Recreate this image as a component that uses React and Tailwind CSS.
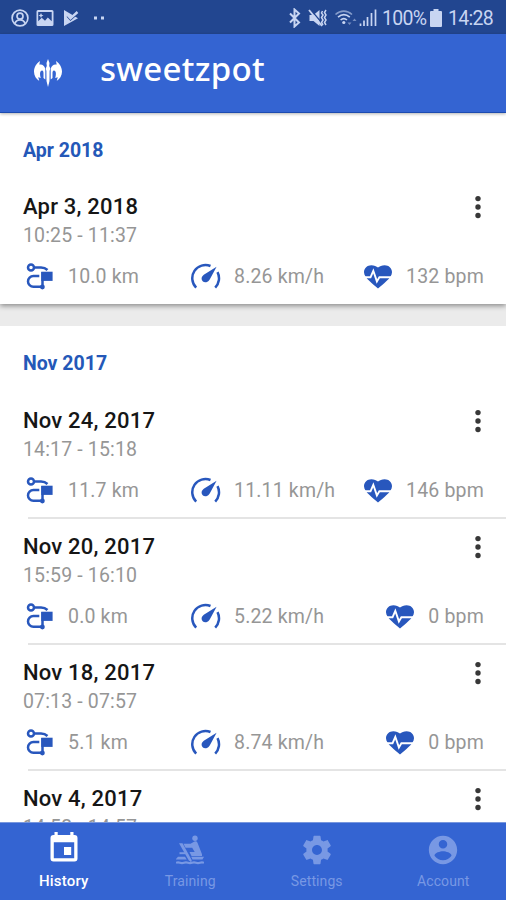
import React from "react";

function RouteIcon() {
  return (
    <svg className="h-7 w-7 shrink-0" viewBox="0 0 28 28" fill="none" stroke="#2857bd" strokeWidth="2.5">
      <circle cx="5" cy="4.500" r="3" />
      <path d="M8.400 4.500H15c3 0 4.600.7 6.500 2.500" />
      <path d="M13.300 13H7.400a5.400 5.400 0 0 0 0 10.800H16" strokeWidth="2.500" />
      <path d="M16.500 9V24" strokeWidth="2.500" />
      <path d="M15.300 8.700H26.600V17.900H15.300z" fill="#2857bd" stroke="none" />
      <circle cx="16.400" cy="24" r="2.400" fill="#2857bd" stroke="none" />
    </svg>
  );
}

function SpeedIcon() {
  return (
    <svg className="h-7 w-[30px] shrink-0" viewBox="0 0 30 28">
      <path d="M5.200 24.600A13.200 13.200 0 0 1 19.500 3M26.500 9.200A13.200 13.200 0 0 1 24.200 24.600" fill="none" stroke="#2857bd" strokeWidth="2.500" />
      <path d="M25.600 3.800 12.800 11.800c-4.600 3.400-1.200 9.200 3.600 6.900 1.300-.6 2-1.600 2.600-2.800z" fill="#2857bd" />
    </svg>
  );
}

function HeartIcon() {
  return (
    <svg className="h-6 w-7 shrink-0" viewBox="0 0 28 24">
      <path d="M14 23.600C10 19.600 0 13.200 0 7.300 0 3 3.400.2 7.300.2c2.800 0 5.200 1 6.700 2.300C15.500 1.200 17.900.2 20.700.2 24.600.2 28 3 28 7.300 28 13.200 18 19.600 14 23.600z" fill="#2857bd" />
      <path d="M0 12.300H6.500L9.300 5.800l3.600 10.600 2.500-4.100H28" fill="none" stroke="#fff" strokeWidth="1.900" />
    </svg>
  );
}

function MoreIcon() {
  return (
    <svg className="h-6 w-2 shrink-0" viewBox="0 0 8 24" fill="#383838">
      <circle cx="4" cy="3.600" r="2.700" />
      <circle cx="4" cy="12" r="2.700" />
      <circle cx="4" cy="20.500" r="2.700" />
    </svg>
  );
}

function Entry({ date, time, km, speed, bpm, last }) {
  return (
    <article className={km ? "h-[126px] shrink-0" : "h-[72px] shrink-0"}>
      <div className="flex h-[42px] items-end justify-between pr-6 pl-[23px]">
        <h3 className="text-[22px] leading-7 font-medium tracking-[0.200px] text-[#161616]">{date}</h3>
        <div className="mb-0.5 flex"><MoreIcon /></div>
      </div>
      <p className="h-[30px] pl-[23px] text-[19.500px] leading-[30px] tracking-[0.150px] text-[#969696]">{time}</p>
      {km && (
        <div className="mt-3 flex h-7 items-center pr-[22px] pl-[26px] text-[19.500px] tracking-[0.170px] text-[#969696]">
          <div className="flex w-[165px] items-center">
            <RouteIcon />
            <span className="ml-3.5">{km}</span>
          </div>
          <div className="flex items-center">
            <SpeedIcon />
            <span className="ml-[13px]">{speed}</span>
          </div>
          <div className="ml-auto flex items-center">
            <HeartIcon />
            <span className="ml-[14px]">{bpm}</span>
          </div>
        </div>
      )}
      {!last && <div className="mt-[12px] ml-7 h-[2px] bg-[#e4e4e4]" />}
    </article>
  );
}

function MonthTitle({ children, compact }) {
  return (
    <h2 className={`flex shrink-0 items-center pl-[23px] text-[19.500px] font-bold text-[#2458b8] ${compact ? "h-[66px] pt-[9px]" : "h-[67px] pt-2"}`}>
      {children}
    </h2>
  );
}

function StatusBar() {
  return (
    <header className="flex h-[34px] shrink-0 items-center bg-[#224690] pt-0.5 pr-[11px] pl-[11px] text-[#c8d5f2]">
      <svg className="h-[18px] w-[96px]" viewBox="0 0 96 18">
        <g fill="none" stroke="currentColor" strokeWidth="1.700">
          <circle cx="9" cy="9" r="7.900" />
          <circle cx="9" cy="7.200" r="3" />
          <path d="M3.700 14.800c1-3 3-4 5.300-4s4.300 1 5.300 4" />
        </g>
        <path fillRule="evenodd" fill="currentColor" d="M27 1h14q1.500 0 1.500 1.500v13Q42.500 17 41 17H27q-1.500 0-1.500-1.500v-13Q25.500 1 27 1zm.2 2v9.300l3.500-3.600 3.300 3 2.800-3.300 3.900 3.800V3zM30 4l.8 1.800 1.700.7-1.700.7L30 9l-.8-1.800-1.700-.7 1.700-.7z" />
        <path fill="currentColor" d="m53 1 14 8.200L53 17z" />
        <path d="m56.500 7 3 3.200L67.500 3" fill="none" stroke="#224690" strokeWidth="2.500" />
        <path d="m56 5.500 3.500 3.800L66.500 3" fill="none" stroke="currentColor" strokeWidth="2.400" />
        <path fill="currentColor" d="M83 7.500h3v3h-3zM90 7.500h3v3h-3z" />
      </svg>
      <svg className="ml-auto h-5 w-[90px]" viewBox="0 0 90 20" fill="none" stroke="currentColor">
        <path d="m1 5.500 9 9-4.500 4V1.500L10 5.500l-9 9" strokeWidth="2" />
        <path d="M20.500 7h4l6-5v16l-6-5h-4z" fill="currentColor" stroke="none" />
        <path d="m21 1 12 14" stroke="#224690" strokeWidth="1.300" />
        <path d="m20 2 13 16" strokeWidth="1.800" />
        <path d="m33.500 3-1 2 1.500 2-1.500 2.500L34 12l-1.500 2.500L34 17M37 2l-1.500 2.500L37 7l-1.500 2.500L37 12l-1.500 2.500L37 17" strokeWidth="1.500" />
        <g strokeWidth="1.600">
          <path d="M46.500 6.500c5-4.500 11.500-4.500 16.500 0" opacity=".6" />
          <path d="M49 9.200c3.700-3.200 8.100-3.200 11.800 0M51.600 12c2-1.800 4.400-1.800 6.400 0" />
        </g>
        <circle cx="54.800" cy="14.500" r="1.600" fill="currentColor" stroke="none" />
        <path d="m58.500 14.500 2 2.500 2-2.500zM63.500 13l2-2.500 2 2.500z" fill="currentColor" stroke="none" opacity=".5" />
        <path d="M71.500 15.500V18M75 12.500V18M78.500 9V18M82.500 5V18M86.500 1.500V18" strokeWidth="1.700" />
      </svg>
      <span className="mt-0.5 ml-[3px] w-[45px] text-[19.500px] leading-6 tracking-[-0.750px] whitespace-nowrap">100%</span>
      <svg className="ml-[3px] h-[18px] w-3" viewBox="0 0 12 18" fill="currentColor">
        <path d="M3.500 0h5v2H11q1 0 1 1v14q0 1-1 1H1q-1 0-1-1V3q0-1 1-1h2.500z" />
      </svg>
      <span className="mt-0.5 ml-[6px] w-[47px] text-[19.500px] leading-6 tracking-[-0.700px] whitespace-nowrap">14:28</span>
    </header>
  );
}

function CalendarIcon() {
  return (
    <svg className="h-[30px] w-7" viewBox="0 0 28 30" fill="currentColor">
      <path fillRule="evenodd" d="M4.500 0h3.200v3h12.600V0h3.200v3h1Q27.500 3 27.500 6v20.500q0 3-3 3h-21q-3 0-3-3V6q0-3 3-3h1zM3.800 10.300v15.900h20.400V10.300zM14 15h7.200v8H14z" />
    </svg>
  );
}

function RowingIcon() {
  return (
    <svg className="h-[30px] w-7" viewBox="0 0 28 30" fill="none" stroke="currentColor">
      <circle cx="19" cy="3.200" r="2.700" fill="currentColor" stroke="none" />
      <path d="M3 8.300h3.500l9 16.500q1 2-.8 2.200l-2-1.800z" fill="currentColor" stroke="none" />
      <path d="M7.500 8.700h7l4-2.200q2-.8 3 1.200L26 19.200V21H15.500l-2-4h5.200l-2.500-4.200H9.500z" fill="currentColor" stroke="none" />
      <path d="M3.500 18.200h6" strokeWidth="2" />
      <path d="M0 24 2 21.800h7l1.700 2.800H0zM16.500 24.600l-1.300-2.800H28l-1.500 2.800z" fill="currentColor" stroke="none" />
      <path d="M0 27.800q2-.8 4 0t4 0 4 0 4 0 4 0 4 0 4 0" strokeWidth="2.200" />
    </svg>
  );
}

function SettingsIcon() {
  return (
    <svg className="h-[34px] w-[34px]" viewBox="0 0 24 24" fill="currentColor">
      <path d="M19.430 12.980c.04-.32.07-.64.07-.98s-.03-.66-.07-.98l2.110-1.650c.19-.15.24-.42.12-.64l-2-3.460c-.12-.22-.39-.3-.61-.22l-2.490 1c-.52-.4-1.080-.73-1.690-.98l-.38-2.650C14.460 2.180 14.250 2 14 2h-4c-.25 0-.46.18-.49.42l-.38 2.650c-.61.25-1.170.59-1.690.98l-2.490-1c-.23-.09-.49 0-.61.22l-2 3.460c-.13.22-.07.49.12.64l2.110 1.650c-.04.32-.07.65-.07.98s.03.66.07.98l-2.110 1.650c-.19.15-.24.42-.12.64l2 3.460c.12.22.39.3.61.22l2.490-1c.52.4 1.080.73 1.690.98l.38 2.650c.03.24.24.42.49.42h4c.25 0 .46-.18.49-.42l.38-2.650c.61-.25 1.170-.59 1.690-.98l2.490 1c.23.09.49 0 .61-.22l2-3.460c.12-.22.07-.49-.12-.64zM12 15.500c-1.930 0-3.500-1.570-3.500-3.500s1.570-3.500 3.500-3.500 3.500 1.570 3.500 3.500-1.570 3.500-3.500 3.500z" />
    </svg>
  );
}

function AccountIcon() {
  return (
    <svg className="h-[34px] w-[34px]" viewBox="0 0 24 24" fill="currentColor">
      <path d="M12 2C6.480 2 2 6.480 2 12s4.480 10 10 10 10-4.480 10-10S17.520 2 12 2zm0 3c1.660 0 3 1.340 3 3s-1.340 3-3 3-3-1.340-3-3 1.340-3 3-3zm0 14.200c-2.500 0-4.710-1.280-6-3.220.03-1.990 4-3.080 6-3.080 1.990 0 5.970 1.090 6 3.080-1.290 1.940-3.500 3.220-6 3.220z" />
    </svg>
  );
}

function Tab({ icon, label, active }) {
  return (
    <div className={active ? "flex flex-col items-center pt-1.5 pl-px text-white" : "flex flex-col items-center pt-[9px] pl-px text-[#7898e4]"}>
      <div className="flex h-[35px] items-center">{icon}</div>
      <span className={active ? "mt-[7px] text-[15px] leading-5 font-medium tracking-[0.200px]" : "mt-1 text-[14px] leading-5 tracking-[0.100px]"}>{label}</span>
    </div>
  );
}

export default function App() {
  return (
    <main className="flex h-[900px] w-[506px] flex-col overflow-hidden bg-[#ebebeb] font-['Roboto',sans-serif]">
      <StatusBar />
      <div className="z-10 flex h-[79px] shrink-0 items-start border-b border-[#1d4bb0] bg-[#3464d2] pl-[34px] text-white shadow-[0_1px_3px_rgba(0,0,0,0.3)]">
        <svg className="mt-[25px] h-7 w-7" viewBox="0 0 28 28" fill="currentColor">
          <path d="M14 0 15.500 4 15.200 7 16.300 9.500 15.600 12 15.500 22 14 28 12.500 22 12.400 12 11.700 9.500 12.800 7 12.500 4z" />
          <path d="M6 2C2.500 4.500 0 8 0 12.700c0 4 2.300 7.300 5.300 9.300L4.200 18.200l2.600.8C5.500 15 6 11.800 8 11.600c1.300 0 1.500 1.400 1.500 3.200V19l1.800 1.500V10C10.500 6.500 8.500 5 5.300 5.500zM22 2c3.500 2.500 6 6 6 10.700 0 4-2.300 7.300-5.300 9.300l1.100-3.800-2.600.8c1.300-4 .8-7.200-1.200-7.400-1.300 0-1.500 1.400-1.500 3.200V19l-1.800 1.500V10C17.500 6.500 19.500 5 22.700 5.500z" />
        </svg>
        <h1 className="mt-[13px] ml-[38px] font-['Noto_Sans',sans-serif] text-[33px] leading-[44px] font-medium tracking-[0.300px]">sweetzpot</h1>
      </div>
      <div className="flex min-h-0 flex-1 flex-col overflow-hidden">
        <section className="flex h-[191px] shrink-0 flex-col bg-white shadow-[0_2px_5px_rgba(0,0,0,0.4)]">
          <MonthTitle compact>Apr 2018</MonthTitle>
          <Entry date="Apr 3, 2018" time="10:25 - 11:37" km="10.0 km" speed="8.26 km/h" bpm="132 bpm" last />
        </section>
        <section className="mt-[22px] flex shrink-0 flex-col bg-white">
          <MonthTitle>Nov 2017</MonthTitle>
          <Entry date="Nov 24, 2017" time="14:17 - 15:18" km="11.7 km" speed="11.11 km/h" bpm="146 bpm" />
          <Entry date="Nov 20, 2017" time="15:59 - 16:10" km="0.0 km" speed="5.22 km/h" bpm="0 bpm" />
          <Entry date="Nov 18, 2017" time="07:13 - 07:57" km="5.1 km" speed="8.74 km/h" bpm="0 bpm" />
          <Entry date="Nov 4, 2017" time="14:52 - 14:57" last />
        </section>
      </div>
      <nav className="grid h-[78px] shrink-0 grid-cols-4 border-t border-[#7897de] bg-[#3464d2]">
        <Tab icon={<CalendarIcon />} label="History" active />
        <Tab icon={<RowingIcon />} label="Training" />
        <Tab icon={<SettingsIcon />} label="Settings" />
        <Tab icon={<AccountIcon />} label="Account" />
      </nav>
    </main>
  );
}
